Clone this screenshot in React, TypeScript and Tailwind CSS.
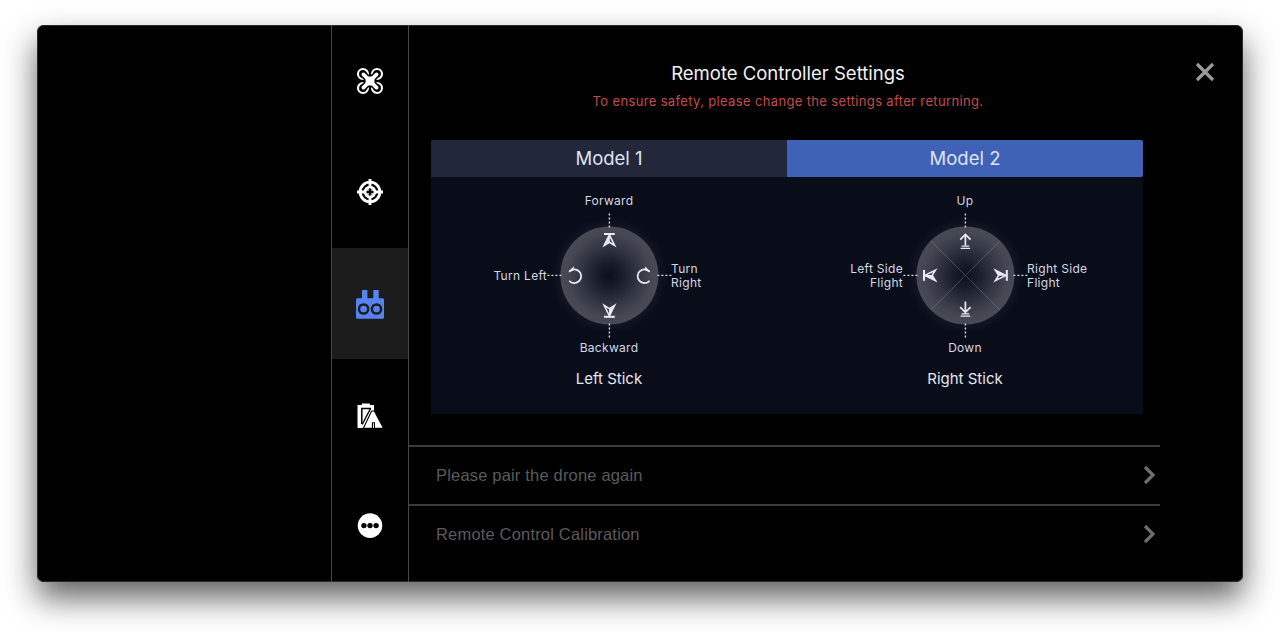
import type { ReactNode } from 'react';

const navItems = [
  { id: 'drone', label: 'Drone', icon: <DroneIcon /> },
  { id: 'target', label: 'Positioning', icon: <TargetIcon /> },
  { id: 'remote', label: 'Remote controller', icon: <RemoteIcon /> },
  { id: 'battery', label: 'Battery', icon: <BatteryIcon /> },
  { id: 'more', label: 'More', icon: <MoreIcon /> },
];

const rows = ['Please pair the drone again', 'Remote Control Calibration'];

function DroneIcon() {
  return (
    <svg width="28" height="28" viewBox="-14 -14 28 28" fill="none" strokeLinecap="round">
      <g stroke="#fff" strokeWidth="2.1">
        <circle cx="-7" cy="-7" r="5" />
        <circle cx="7" cy="-7" r="5" />
        <circle cx="-7" cy="7" r="5" />
        <circle cx="7" cy="7" r="5" />
      </g>
      <path d="M-5 -5L5 5M5 -5L-5 5" stroke="#000" strokeWidth="7" />
      <path d="M-6.6 -6.6L6.6 6.6M6.6 -6.6L-6.6 6.6" stroke="#fff" strokeWidth="3.8" />
      <rect x="-4.4" y="-4.6" width="8.8" height="9.2" rx="1.5" fill="#fff" />
    </svg>
  );
}

function TargetIcon() {
  return (
    <svg width="28" height="28" viewBox="-14 -14 28 28" fill="none">
      <circle r="9.9" stroke="#fff" strokeWidth="2.9" />
      <circle r="6.3" fill="#fff" />
      <path d="M0 -13V-5M0 13V5M-13 0H-5M13 0H5" stroke="#fff" strokeWidth="2.9" />
      <circle r="3.6" fill="#000" fillOpacity=".3" />
      <path d="M0 -3.4V3.4M-3.4 0H3.4" stroke="#000" strokeWidth="2.2" />
    </svg>
  );
}

function RemoteIcon() {
  return (
    <svg width="28" height="29" viewBox="0 0 28 29" fill="#5584f2" className="mt-0.5">
      <rect x="6" y="0" width="5.4" height="10" rx=".5" />
      <rect x="17.3" y="0" width="5.4" height="10" rx=".5" />
      <rect x="0" y="8.3" width="28" height="20.5" rx="1.5" />
      <circle cx="7.6" cy="19" r="4.6" stroke="#1c1c1c" strokeWidth="2.5" />
      <circle cx="20.5" cy="19" r="4.6" stroke="#1c1c1c" strokeWidth="2.5" />
    </svg>
  );
}

function BatteryIcon() {
  return (
    <svg width="26" height="26" viewBox="0 0 26 26" className="mt-0.5">
      <path d="M0.5 2H4.8V0.4H12.8V2H17V25H0.5Z" fill="#fff" />
      <path d="M4.2 5.4H14M4.8 5.4V21" stroke="#000" strokeWidth="1.5" fill="none" />
      <path d="M13.6 5.4L5.2 21.5" stroke="#000" strokeWidth="1.3" />
      <path d="M15 8.6H17L25.6 24.8H18V19.2H14.9V24.8H7.2Z" fill="#fff" stroke="#000" strokeWidth="2.2" strokeLinejoin="round" paintOrder="stroke" />
    </svg>
  );
}

function MoreIcon() {
  return (
    <svg width="26" height="26" viewBox="-13 -12.6 26 26">
      <circle r="12.3" fill="#fff" />
      <circle cx="-6.1" r="2.7" fill="#000" />
      <circle r="2.7" fill="#000" />
      <circle cx="6.1" r="2.7" fill="#000" />
    </svg>
  );
}

// Half-filled pointer with a bar at its tip, drawn pointing up
function Pointer({ angle }: { angle: number }) {
  return (
    <g transform={`rotate(${angle})`}>
      <path d="M-5.4 -41.4H5.4" stroke="#e9eaf5" strokeWidth="2" />
      <path d="M0 -40.6L5.2 -30L0 -33.2L-5.2 -30Z" fill="none" stroke="#e9eaf5" strokeWidth="1.6" strokeLinejoin="miter" />
      <path d="M0.4 -40.6L-5.4 -30L0.4 -33.2Z" fill="#e9eaf5" />
    </g>
  );
}

function TurnArrow({ mirrored = false }: { mirrored?: boolean }) {
  return (
    <g transform={mirrored ? 'scale(-1 1)' : undefined} fill="none" stroke="#e9eaf5" strokeWidth="1.8" strokeLinecap="round">
      <path d="M-39.8 -4A6.8 6.8 0 1 1 -39.6 5.9" />
      <path d="M-40 -4L-36.4 -5.6L-36.2 -7.6Z" fill="#e9eaf5" strokeWidth="1.2" />
    </g>
  );
}

function Dial({ id, children }: { id: string; children: ReactNode }) {
  return (
    <svg width="124" height="124" viewBox="-62.4 -62.4 124 124" className="overflow-visible">
      <defs>
        <radialGradient id={`${id}-face`}>
          <stop offset="0" stopColor="#0b0e1b" />
          <stop offset=".3" stopColor="#1c1f2d" />
          <stop offset=".62" stopColor="#343744" />
          <stop offset=".85" stopColor="#444752" />
          <stop offset="1" stopColor="#484a54" />
        </radialGradient>
        <radialGradient id={`${id}-glow`}>
          <stop offset=".8" stopColor="#8088a0" stopOpacity=".09" />
          <stop offset="1" stopColor="#8088a0" stopOpacity="0" />
        </radialGradient>
      </defs>
      <circle r="58" fill={`url(#${id}-glow)`} />
      <circle r="49" fill={`url(#${id}-face)`} />
      <path d="M0 -62V-48M0 62V48M-62 0H-47M62 0H47" stroke="#d9dbe6" strokeWidth="1.4" strokeDasharray="2 2" />
      {children}
    </svg>
  );
}

type StickProps = {
  name: string;
  top: string;
  bottom: string;
  left: ReactNode;
  right: ReactNode;
  children: ReactNode;
};

function Stick({ name, top, bottom, left, right, children }: StickProps) {
  return (
    <div className="flex w-1/2 flex-col items-center pt-4 text-[12px] leading-[14px] tracking-[0.3px] text-[#d5d7e2]">
      <span className="h-5 pt-px">{top}</span>
      <div className="grid w-full grid-cols-[1fr_124px_1fr] items-center">
        <span className="pt-px text-right">{left}</span>
        {children}
        <span className="pt-px">{right}</span>
      </div>
      <span className="mt-1">{bottom}</span>
      <span className="mt-[14px] text-[15px] leading-5 text-[#e4e6f0] tracking-normal">{name}</span>
    </div>
  );
}

export default function App() {
  return (
    <div className="h-[632px] w-[1280px] overflow-hidden bg-white pl-[37px] pt-[25px] font-['Inter','Liberation_Sans',sans-serif]">
      <div className="flex h-[557px] w-[1206px] overflow-hidden rounded-[7px] bg-black shadow-[0_16px_32px_rgba(0,0,0,0.62)] inset-ring inset-ring-[#2a2a2a]">
        <div className="w-[294px]" />

        <nav className="flex w-[78px] flex-col border-x border-[#484848]">
          {navItems.map((item) => (
            <button
              key={item.id}
              aria-label={item.label}
              className={`flex flex-1 items-center justify-center ${item.id === 'remote' ? 'bg-[#1c1c1c]' : ''}`}
            >
              {item.icon}
            </button>
          ))}
        </nav>

        <main className="flex w-[751px] flex-col">
          <header className="flex flex-col items-center pl-[7px] pt-9">
            <h1 className="text-[18.5px] leading-6 text-[#f2f2f2]">Remote Controller Settings</h1>
            <p className="mt-[7px] text-[13px] leading-[18px] tracking-[0.35px] text-[#c54b4b]">
              To ensure safety, please change the settings after returning.
            </p>
          </header>

          <section className="ml-[22px] mt-[30px] h-[274px] w-[712px] bg-[#090d1a]">
            <div className="flex h-[37px] text-[18.5px] text-[#dfe3f3]">
              <button className="flex-1 rounded-tl-[2px] bg-[#23273a]">Model 1</button>
              <button className="flex-1 rounded-r-[2px] bg-[#3f62b7]">Model 2</button>
            </div>
            <div className="flex">
              <Stick name="Left Stick" top="Forward" bottom="Backward" left="Turn Left" right={<>Turn<br />Right</>}>
                <Dial id="left">
                  <Pointer angle={0} />
                  <Pointer angle={180} />
                  <TurnArrow />
                  <TurnArrow mirrored />
                </Dial>
              </Stick>
              <Stick name="Right Stick" top="Up" bottom="Down" left={<>Left Side<br />Flight</>} right={<>Right Side<br />Flight</>}>
                <Dial id="right">
                  <path d="M-34.5 -34.5L34.5 34.5M34.5 -34.5L-34.5 34.5" stroke="#8a8e9c" strokeOpacity=".45" strokeWidth=".9" />
                  <Pointer angle={-90} />
                  <Pointer angle={90} />
                  <g fill="none" stroke="#e9eaf5" strokeWidth="1.7">
                    <path d="M0 -30V-41M-5.2 -35.8L0 -41L5.2 -35.8" />
                    <path d="M-3.8 -29.3H3.8M-4.8 -27H4.8" strokeWidth="1.2" />
                    <path d="M0 26V37M-5.2 31.8L0 37L5.2 31.8" />
                    <path d="M-3.8 38.4H3.8M-4.8 40.7H4.8" strokeWidth="1.2" />
                  </g>
                </Dial>
              </Stick>
            </div>
          </section>

          <ul className="mt-[31px] font-['Liberation_Sans',Arial,sans-serif] text-[16.5px] tracking-[0.18px] text-[#5b5b5b]">
            {rows.map((row) => (
              <li key={row} className="flex h-[59px] items-center justify-between border-t-2 border-[#3c3c3c] pl-[27px] pr-1">
                {row}
                <svg width="13" height="20" viewBox="0 0 13 20" fill="none" stroke="#6e6e6e" strokeWidth="3.2" className="mb-0.5">
                  <path d="M2 2L10 10L2 18" />
                </svg>
              </li>
            ))}
          </ul>
        </main>

        <div className="flex flex-1 items-start justify-end pr-7 pt-[37px]">
          <button aria-label="Close">
            <svg width="20" height="20" viewBox="-10 -10 20 20" stroke="#9b9b9b" strokeWidth="3.2">
              <path d="M-8 -8L8 8M8 -8L-8 8" />
            </svg>
          </button>
        </div>
      </div>
    </div>
  );
}
